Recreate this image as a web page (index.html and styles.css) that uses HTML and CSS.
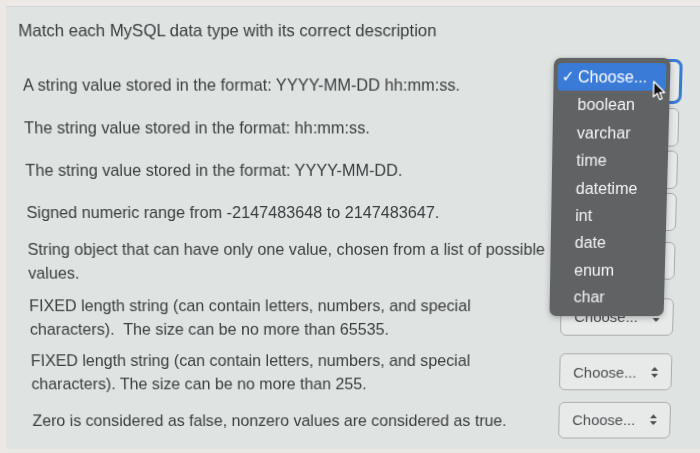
FILE: index.html
```html
<!DOCTYPE html>
<html lang="en">
<head>
<meta charset="utf-8">
<title>Match MySQL data types</title>
<link rel="stylesheet" href="styles.css">
</head>
<body>
<div class="panel">
  <div class="sheet">
    <h1 class="title">Match each MySQL data type with its correct description</h1>
    <div class="rows">
      <div class="row">
        <p class="desc">A string value stored in the format: YYYY-MM-DD hh:mm:ss.</p>
        <div class="select focused">
          <span class="label">Choose...</span>
          <svg class="arrows" viewBox="0 0 7 11" width="7" height="11"><path d="M3.5 0 L7 4 H0 Z M3.5 11 L7 7 H0 Z"/></svg>
          <ul class="menu">
            <li class="item active"><span class="check">✓</span>Choose...</li>
            <li class="item">boolean</li>
            <li class="item">varchar</li>
            <li class="item">time</li>
            <li class="item">datetime</li>
            <li class="item">int</li>
            <li class="item">date</li>
            <li class="item">enum</li>
            <li class="item">char</li>
          </ul>
          <svg class="cursor" viewBox="0 0 13 20" width="13" height="20"><path d="M1 1 L1 16 L4.6 12.6 L7.2 18.6 L9.6 17.6 L7 11.8 L12 11.8 Z" fill="#111" stroke="#fff" stroke-width="1.3" stroke-linejoin="round"/></svg>
        </div>
      </div>
      <div class="row">
        <p class="desc">The string value stored in the format: hh:mm:ss.</p>
        <div class="select"><span class="label">Choose...</span><svg class="arrows" viewBox="0 0 7 11" width="7" height="11"><path d="M3.5 0 L7 4 H0 Z M3.5 11 L7 7 H0 Z"/></svg></div>
      </div>
      <div class="row">
        <p class="desc">The string value stored in the format: YYYY-MM-DD.</p>
        <div class="select"><span class="label">Choose...</span><svg class="arrows" viewBox="0 0 7 11" width="7" height="11"><path d="M3.5 0 L7 4 H0 Z M3.5 11 L7 7 H0 Z"/></svg></div>
      </div>
      <div class="row">
        <p class="desc">Signed numeric range from -2147483648 to 2147483647.</p>
        <div class="select"><span class="label">Choose...</span><svg class="arrows" viewBox="0 0 7 11" width="7" height="11"><path d="M3.5 0 L7 4 H0 Z M3.5 11 L7 7 H0 Z"/></svg></div>
      </div>
      <div class="row tall">
        <p class="desc">String object that can have only one value, chosen from a list of possible<br>values.</p>
        <div class="select"><span class="label">Choose...</span><svg class="arrows" viewBox="0 0 7 11" width="7" height="11"><path d="M3.5 0 L7 4 H0 Z M3.5 11 L7 7 H0 Z"/></svg></div>
      </div>
      <div class="row tall">
        <p class="desc">FIXED length string (can contain letters, numbers, and special<br>characters).&nbsp; The size can be no more than 65535.</p>
        <div class="select"><span class="label">Choose...</span><svg class="arrows" viewBox="0 0 7 11" width="7" height="11"><path d="M3.5 0 L7 4 H0 Z M3.5 11 L7 7 H0 Z"/></svg></div>
      </div>
      <div class="row tall">
        <p class="desc">FIXED length string (can contain letters, numbers, and special<br>characters). The size can be no more than 255.</p>
        <div class="select"><span class="label">Choose...</span><svg class="arrows" viewBox="0 0 7 11" width="7" height="11"><path d="M3.5 0 L7 4 H0 Z M3.5 11 L7 7 H0 Z"/></svg></div>
      </div>
      <div class="row">
        <p class="desc">Zero is considered as false, nonzero values are considered as true.</p>
        <div class="select"><span class="label">Choose...</span><svg class="arrows" viewBox="0 0 7 11" width="7" height="11"><path d="M3.5 0 L7 4 H0 Z M3.5 11 L7 7 H0 Z"/></svg></div>
      </div>
    </div>
  </div>
</div>
</body>
</html>
```
FILE: styles.css
```css
html, body {
  margin: 0;
  padding: 0;
}
body {
  width: 700px;
  height: 453px;
  overflow: hidden;
  background: #ece8e6;
  font-family: "Liberation Sans", Arial, sans-serif;
  color: #3b3d3f;
}
.panel {
  margin: 6px 0 0 6px;
  height: 443px;
  background: #dfe3e1;
  border-top: 1px solid #d3d5d4;
  box-sizing: border-box;
}
.sheet {
  height: 100%;
  box-sizing: border-box;
  padding: 14px 24px 0 18px;
  transform: perspective(800px) rotateX(-4deg);
  transform-origin: 50% 50%;
}
.title {
  margin: 0;
  font-size: 16.5px;
  font-weight: normal;
  line-height: 24px;
  color: #3a3c3e;
}
.rows {
  margin-top: 20px;
  display: flex;
  flex-direction: column;
}
.row {
  display: flex;
  align-items: center;
  min-height: 42px;
  gap: 6px;
}
.row.tall {
  min-height: 56.5px;
}
.desc {
  flex: 1;
  margin: 0;
  padding-left: 3px;
  font-size: 16.2px;
  line-height: 24px;
  color: #3b3d3f;
}
.select {
  position: relative;
  flex: 0 0 114px;
  height: 38px;
  box-sizing: border-box;
  border: 1px solid #a9acab;
  border-radius: 6px;
  background: #e7eae9;
  display: flex;
  align-items: center;
  justify-content: space-between;
  padding: 0 13px 0 13px;
}
.select.focused {
  border: 3px solid #3c79d2;
  border-radius: 8px;
  height: 44px;
  flex-basis: 118px;
  margin: -8px -2px -2px -2px;
}
.label {
  font-size: 15px;
  color: #4c4e50;
}
.arrows {
  fill: #4a4c4e;
}
.menu {
  position: absolute;
  top: -4px;
  left: -12px;
  width: 115px;
  margin: 0;
  padding: 5px 4px;
  list-style: none;
  background: #606264;
  border-radius: 7px;
  box-shadow: 0 2px 6px rgba(0, 0, 0, 0.25);
  box-sizing: border-box;
  z-index: 2;
}
.item {
  position: relative;
  height: 27.4px;
  line-height: 27px;
  padding-left: 20px;
  font-size: 16px;
  color: #f4f4f4;
  border-radius: 4px;
}
.item.active {
  background: #3b7bd8;
  color: #ffffff;
}
.check {
  position: absolute;
  left: 4px;
  font-size: 15px;
  font-weight: bold;
  font-family: "DejaVu Sans", sans-serif;
}
.cursor {
  position: absolute;
  top: 18px;
  left: 86px;
  z-index: 3;
}
```
